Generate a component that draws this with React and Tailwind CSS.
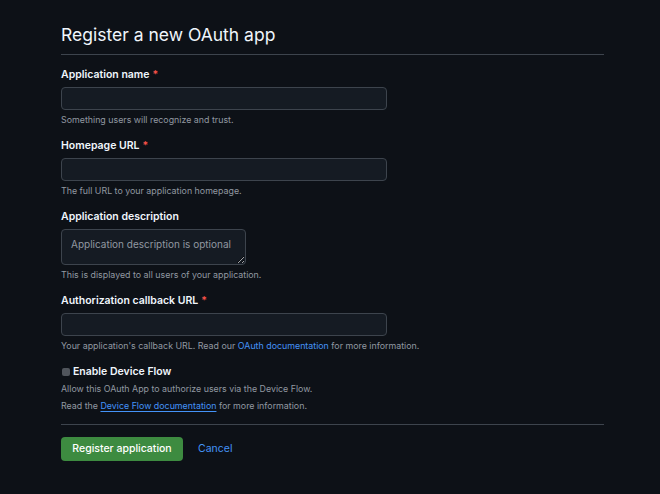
import React from "react";

const font = { fontFamily: "Inter, 'Noto Sans', sans-serif" };

function Field({ label, required, hint, children }) {
  return (
    <div className="mb-[13px]">
      <label className="block h-[14px] text-[10.5px] font-semibold text-[#f0f6fc] leading-[14px] mb-[5px]">
        {label}
        {required && <span className="text-[#f85149] ml-[3px]">*</span>}
      </label>
      {children}
      <p className="h-[12px] text-[8.85px] text-[#9198a1] leading-[12px] mt-[4px]">{hint}</p>
    </div>
  );
}

function TextInput() {
  return (
    <input
      type="text"
      className="block w-[326px] h-[23px] rounded-[4px] border border-[#3d444d] bg-[#151b23] px-2 text-[11px] text-[#f0f6fc] outline-none"
    />
  );
}

export default function App() {
  return (
    <div className="min-h-screen bg-[#0d1117] text-[#f0f6fc]" style={font}>
      <div className="ml-[61px] w-[543px] pt-[22px]">
        <h1 className="text-[17.5px] font-normal leading-[26px] pb-[6px] border-b border-[#3d444d] mb-[13px]">
          Register a new OAuth app
        </h1>

        <Field label="Application name" required hint="Something users will recognize and trust.">
          <TextInput />
        </Field>

        <Field label="Homepage URL" required hint="The full URL to your application homepage.">
          <TextInput />
        </Field>

        <Field label="Application description" hint="This is displayed to all users of your application.">
          <textarea
            placeholder="Application description is optional"
            className="block w-[185px] h-[36px] rounded-[4px] border border-[#3d444d] bg-[#151b23] px-[9px] pt-[7px] text-[10px] leading-[14px] text-[#f0f6fc] placeholder:text-[#9198a1] outline-none"
          />
        </Field>

        <Field
          label="Authorization callback URL"
          required
          hint={
            <>
              Your application's callback URL. Read our{" "}
              <a href="#" className="text-[#4493f8]">OAuth documentation</a> for more information.
            </>
          }
        >
          <TextInput />
        </Field>

        <div className="mt-[1px]">
          <label className="flex items-center gap-[3px] h-[14px] text-[10.5px] font-semibold leading-[14px]">
            <span className="inline-block w-[8px] h-[8px] ml-[1px] rounded-[2px] bg-[#50555c]" />
            Enable Device Flow
          </label>
          <p className="h-[12px] text-[8.85px] text-[#9198a1] leading-[12px] mt-[4px]">
            Allow this OAuth App to authorize users via the Device Flow.
          </p>
          <p className="h-[12px] text-[8.85px] text-[#9198a1] leading-[12px] mt-[5px]">
            Read the{" "}
            <a href="#" className="text-[#4493f8] underline underline-offset-2">Device Flow documentation</a>{" "}
            for more information.
          </p>
        </div>

        <div className="border-t border-[#3d444d] mt-[12px] pt-[12px] flex items-center gap-[15px]">
          <button className="h-[24px] w-[122px] rounded-[4px] bg-[#3d8b40] text-[10.5px] font-medium text-white">
            Register application
          </button>
          <a href="#" className="text-[10.5px] text-[#4493f8]">Cancel</a>
        </div>
      </div>
    </div>
  );
}
